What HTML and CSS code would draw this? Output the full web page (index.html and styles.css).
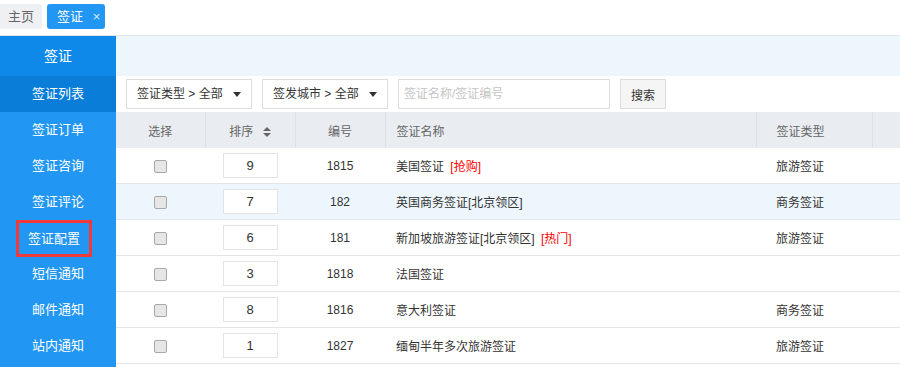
FILE: index.html
```html
<!DOCTYPE html>
<html lang="zh-CN">
<head>
    <meta charset="UTF-8">
    <title>签证</title>
    <link rel="stylesheet" href="styles.css">
</head>
<body>
    <div class="tabs">
        <span class="tab">主页</span>
        <span class="tab active">签证 <span class="close">×</span></span>
    </div>
    <div class="layout">
        <ul class="side">
            <li class="side-title">签证</li>
            <li class="current">签证列表</li>
            <li>签证订单</li>
            <li>签证咨询</li>
            <li>签证评论</li>
            <li><span class="marked">签证配置</span></li>
            <li>短信通知</li>
            <li>邮件通知</li>
            <li>站内通知</li>
        </ul>
        <div class="main">
            <div class="strip"></div>
            <div class="filters">
                <div class="select">签证类型 &gt; 全部 <i class="caret"></i></div>
                <div class="select">签发城市 &gt; 全部 <i class="caret"></i></div>
                <input class="search" type="text" placeholder="签证名称/签证编号">
                <button class="btn">搜索</button>
            </div>
            <table class="grid">
                <colgroup>
                    <col style="width:89px"><col style="width:90px"><col style="width:90px">
                    <col style="width:371px"><col style="width:116px"><col style="width:100px">
                </colgroup>
                <thead>
                    <tr>
                        <th>选择</th>
                        <th>排序
                            <svg class="sort" width="8" height="10" viewBox="0 0 8 10"><path d="M4 0L8 4H0z M4 10L8 6H0z" fill="#666"/></svg>
                        </th>
                        <th>编号</th>
                        <th class="left">签证名称</th>
                        <th class="kind">签证类型</th>
                        <th></th>
                    </tr>
                </thead>
                <tbody>
                    <tr>
                        <td><span class="check"></span></td>
                        <td><span class="num">9</span></td>
                        <td>1815</td>
                        <td class="left">美国签证 <span class="tag">[抢购]</span></td>
                        <td class="kind">旅游签证</td>
                        <td></td>
                    </tr>
                    <tr class="hover">
                        <td><span class="check"></span></td>
                        <td><span class="num">7</span></td>
                        <td>182</td>
                        <td class="left">英国商务签证[北京领区]</td>
                        <td class="kind">商务签证</td>
                        <td></td>
                    </tr>
                    <tr>
                        <td><span class="check"></span></td>
                        <td><span class="num">6</span></td>
                        <td>181</td>
                        <td class="left">新加坡旅游签证[北京领区] <span class="tag">[热门]</span></td>
                        <td class="kind">旅游签证</td>
                        <td></td>
                    </tr>
                    <tr>
                        <td><span class="check"></span></td>
                        <td><span class="num">3</span></td>
                        <td>1818</td>
                        <td class="left">法国签证</td>
                        <td class="kind"></td>
                        <td></td>
                    </tr>
                    <tr>
                        <td><span class="check"></span></td>
                        <td><span class="num">8</span></td>
                        <td>1816</td>
                        <td class="left">意大利签证</td>
                        <td class="kind">商务签证</td>
                        <td></td>
                    </tr>
                    <tr>
                        <td><span class="check"></span></td>
                        <td><span class="num">1</span></td>
                        <td>1827</td>
                        <td class="left">缅甸半年多次旅游签证</td>
                        <td class="kind">旅游签证</td>
                        <td></td>
                    </tr>
                </tbody>
            </table>
        </div>
    </div>
</body>
</html>
```
FILE: styles.css
```css
body {
    margin: 0;
    font-family: "Liberation Sans", "Noto Sans CJK SC", sans-serif;
    font-size: 12px;
    color: #333;
    background: #fff;
    overflow: hidden;
}
.tabs {
    height: 36px;
    box-sizing: border-box;
    border-bottom: 1px solid #e3e7ec;
    padding-top: 4px;
    display: flex;
    gap: 5px;
}
.tab {
    height: 25px;
    line-height: 25px;
    padding: 0 8px;
    background: #eef0f3;
    color: #666;
    border-radius: 0 3px 3px 0;
    font-size: 13px;
}
.tab.active {
    background: #2196f3;
    color: #fff;
    border-radius: 3px;
    padding: 0 5px 0 10px;
}
.close {
    margin-left: 6px;
    font-size: 13px;
    color: #d6ecfd;
}
.layout {
    display: flex;
}
.side {
    list-style: none;
    margin: 0;
    padding: 0;
    width: 116px;
    flex: none;
    background: #2196f3;
    height: 332px;
}
.side li {
    height: 36px;
    line-height: 36px;
    text-align: center;
    color: #fff;
    font-size: 13px;
}
.side .side-title {
    height: 40px;
    line-height: 40px;
    background: #0e89ea;
    font-size: 14px;
}
.side .current {
    background: #0a7dd9;
}
.marked {
    display: inline-block;
    width: 70px;
    height: 31px;
    line-height: 31px;
    border: 3px solid #f23a3a;
    margin-left: -8px;
}
.main {
    flex: 1;
    overflow: hidden;
}
.strip {
    height: 40px;
    background: #eef6fd;
}
.filters {
    height: 36px;
    display: flex;
    align-items: center;
    padding-left: 10px;
    gap: 11px;
}
.select {
    height: 28px;
    line-height: 28px;
    border: 1px solid #ddd;
    padding: 0 10px;
    width: 104px;
    display: flex;
    align-items: center;
    font-size: 12px;
}
.select + .select {
    width: 104px;
    margin-left: -1px;
}
.caret {
    margin-left: auto;
    border-left: 4px solid transparent;
    border-right: 4px solid transparent;
    border-top: 5px solid #333;
}
.search {
    width: 212px;
    height: 30px;
    box-sizing: border-box;
    border: 1px solid #ddd;
    padding: 0 5px;
    font-family: inherit;
    font-size: 12px;
    margin-left: -1px;
}
.search::placeholder {
    color: #c4c4c4;
}
.btn {
    width: 46px;
    height: 30px;
    border: 1px solid #ddd;
    background: #f5f5f5;
    font-family: inherit;
    font-size: 12px;
    color: #333;
    margin-left: -1px;
    padding: 0;
}
.grid {
    border-collapse: collapse;
    table-layout: fixed;
    width: 856px;
}
.grid th {
    height: 36px;
    background: #e9ecf0;
    color: #666;
    font-weight: normal;
    font-size: 12px;
    border-left: 1px solid #dde0e5;
    text-align: center;
    padding: 0;
}
.grid th:first-child {
    border-left: none;
}
.grid td {
    height: 35px;
    text-align: center;
    border-bottom: 1px solid #e2e6eb;
    padding: 0;
}
.grid .left {
    text-align: left;
    padding-left: 11px;
}
.grid .kind {
    text-align: left;
    padding-left: 20px;
}
.sort {
    margin-left: 6px;
    vertical-align: -1px;
}
.hover td {
    background: #eef6fd;
}
.check {
    display: inline-block;
    width: 11px;
    height: 11px;
    border: 1px solid #a8a8a8;
    border-radius: 2px;
    background: #e6e6e6;
    vertical-align: middle;
}
.num {
    display: inline-block;
    width: 53px;
    height: 23px;
    line-height: 23px;
    border: 1px solid #e3e3e3;
    background: #fff;
    font-size: 13px;
    vertical-align: middle;
}
.tag {
    color: #f00;
    margin-left: 3px;
}
```
